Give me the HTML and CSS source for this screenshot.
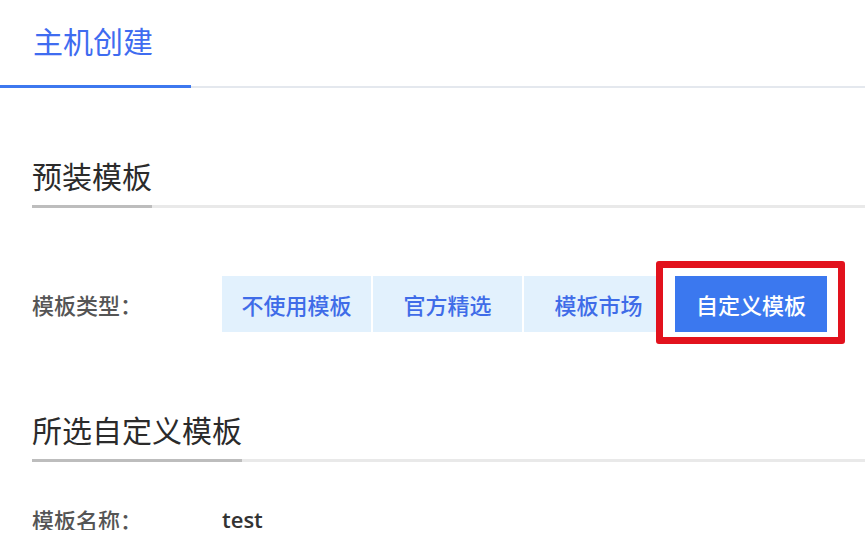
FILE: index.html
```html
<!DOCTYPE html>
<html>
    <head>
        <title>主机创建</title>
        <link rel="stylesheet" href="styles.css">
    </head>

    <body>
        <nav class="tabs">
            <div class="tab active">主机创建</div>
        </nav>

        <section>
            <h2 class="sectionTitle first"><span>预装模板</span></h2>
            <div class="formRow typeRow">
                <label class="rowLabel">模板类型：</label>
                <div class="typeSelector">
                    <button class="typeBtn">不使用模板</button>
                    <button class="typeBtn">官方精选</button>
                    <button class="typeBtn">模板市场</button>
                    <span class="highlight">
                        <button class="typeBtn selected">自定义模板</button>
                    </span>
                </div>
            </div>
        </section>

        <section>
            <h2 class="sectionTitle second"><span>所选自定义模板</span></h2>
            <div class="formRow nameRow">
                <label class="rowLabel">模板名称：</label>
                <span class="rowValue">test</span>
            </div>
        </section>
    </body>
</html>
```

FILE: styles.css
```css
body {
    margin: 0;
    font-family: "Noto Sans CJK SC", "Open Sans", sans-serif;
    background-color: #fff;
    color: #333;
}

.tabs {
    display: flex;
    border-bottom: 2px solid #e4e8ee;
}

.tab {
    box-sizing: border-box;
    width: 191px;
    padding: 25px 0 30px 33px;
    font-size: 30px;
    line-height: 30px;
    margin-bottom: -2px;
}

.tab.active {
    color: #3f6cf0;
    border-bottom: 3px solid #3d78ef;
}

.sectionTitle {
    display: flex;
    margin: 0 0 0 32px;
    font-size: 30px;
    line-height: 30px;
    font-weight: normal;
    color: #2b2b2b;
    border-bottom: 3px solid #e9e9e9;
}

.sectionTitle span {
    padding-bottom: 15px;
    margin-bottom: -3px;
    border-bottom: 3px solid #bdbdbd;
}

.sectionTitle.first {
    margin-top: 72px;
}

.sectionTitle.second {
    margin-top: 82px;
}

.formRow {
    display: flex;
    align-items: center;
    padding-left: 32px;
    font-size: 22px;
    font-weight: 500;
}

.typeRow {
    margin-top: 68px;
}

.nameRow {
    margin-top: 46px;
    line-height: 22px;
}

.rowLabel {
    width: 190px;
    color: #555;
}

.rowValue {
    font-family: "Open Sans", sans-serif;
    font-weight: 600;
    color: #333;
}

.typeSelector {
    display: flex;
    gap: 2px;
}

.typeBtn {
    width: 149px;
    height: 56px;
    padding: 0;
    border: none;
    font-family: inherit;
    font-size: 22px;
    font-weight: 500;
    color: #3f6ce8;
    background-color: #e2f1fd;
}

.highlight {
    position: relative;
    display: flex;
}

.highlight::before {
    content: '';
    position: absolute;
    top: -15px;
    left: -19px;
    right: -18px;
    bottom: -12px;
    border: 7px solid #e2121d;
    border-radius: 3px;
    background-color: #fff;
}

.typeBtn.selected {
    position: relative;
    width: 152px;
    color: #fff;
    background-color: #3b78ef;
}
```
